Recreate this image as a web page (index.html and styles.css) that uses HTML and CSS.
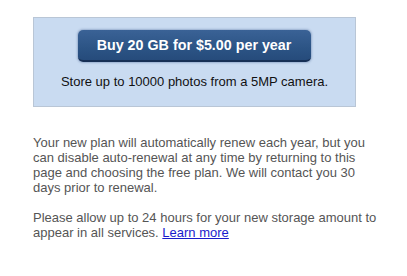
FILE: index.html
```html
<!DOCTYPE html>
<html>
<head>
<meta charset="utf-8">
<link rel="stylesheet" href="styles.css">
</head>
<body>
<div class="page">
  <div class="offer">
    <button class="buy">Buy 20 GB for $5.00 per year</button>
    <div class="offer-note">Store up to 10000 photos from a 5MP camera.</div>
  </div>
  <p class="info">Your new plan will automatically renew each year, but you can disable auto-renewal at any time by returning to this page and choosing the free plan. We will contact you 30 days prior to renewal.</p>
  <p class="info">Please allow up to 24 hours for your new storage amount to appear in all services. <a href="#" class="learn">Learn more</a></p>
</div>
</body>
</html>
```
FILE: styles.css
```css
html, body {
  margin: 0;
  padding: 0;
  background: #ffffff;
}
.page {
  padding: 17px 0 0 33px;
  width: 352px;
  font-family: "Liberation Sans", Arial, sans-serif;
}
.offer {
  box-sizing: border-box;
  width: 323px;
  height: 90px;
  background: #c9dbf1;
  border: 1px solid #b9c6d6;
  display: flex;
  flex-direction: column;
  align-items: center;
  padding-top: 12px;
}
.buy {
  box-sizing: border-box;
  width: 233px;
  height: 32px;
  margin-left: -1px;
  border: none;
  border-radius: 5px;
  background: linear-gradient(#3a6296, #2c5485 60%, #264b7b);
  border-bottom: 2px solid #162f55;
  box-shadow: 0 0 2px 1px rgba(60, 90, 140, 0.35);
  color: #ffffff;
  font-family: "Liberation Sans", Arial, sans-serif;
  font-weight: bold;
  font-size: 14.3px;
  padding: 0;
  line-height: 28px;
}
.offer-note {
  margin-top: 12px;
  font-size: 13px;
  color: #111111;
}
.info {
  margin: 28px 0 0;
  font-size: 13px;
  line-height: 15px;
  color: #555555;
}
.info + .info {
  margin-top: 15px;
}
.learn {
  color: #1a1acc;
}
```
